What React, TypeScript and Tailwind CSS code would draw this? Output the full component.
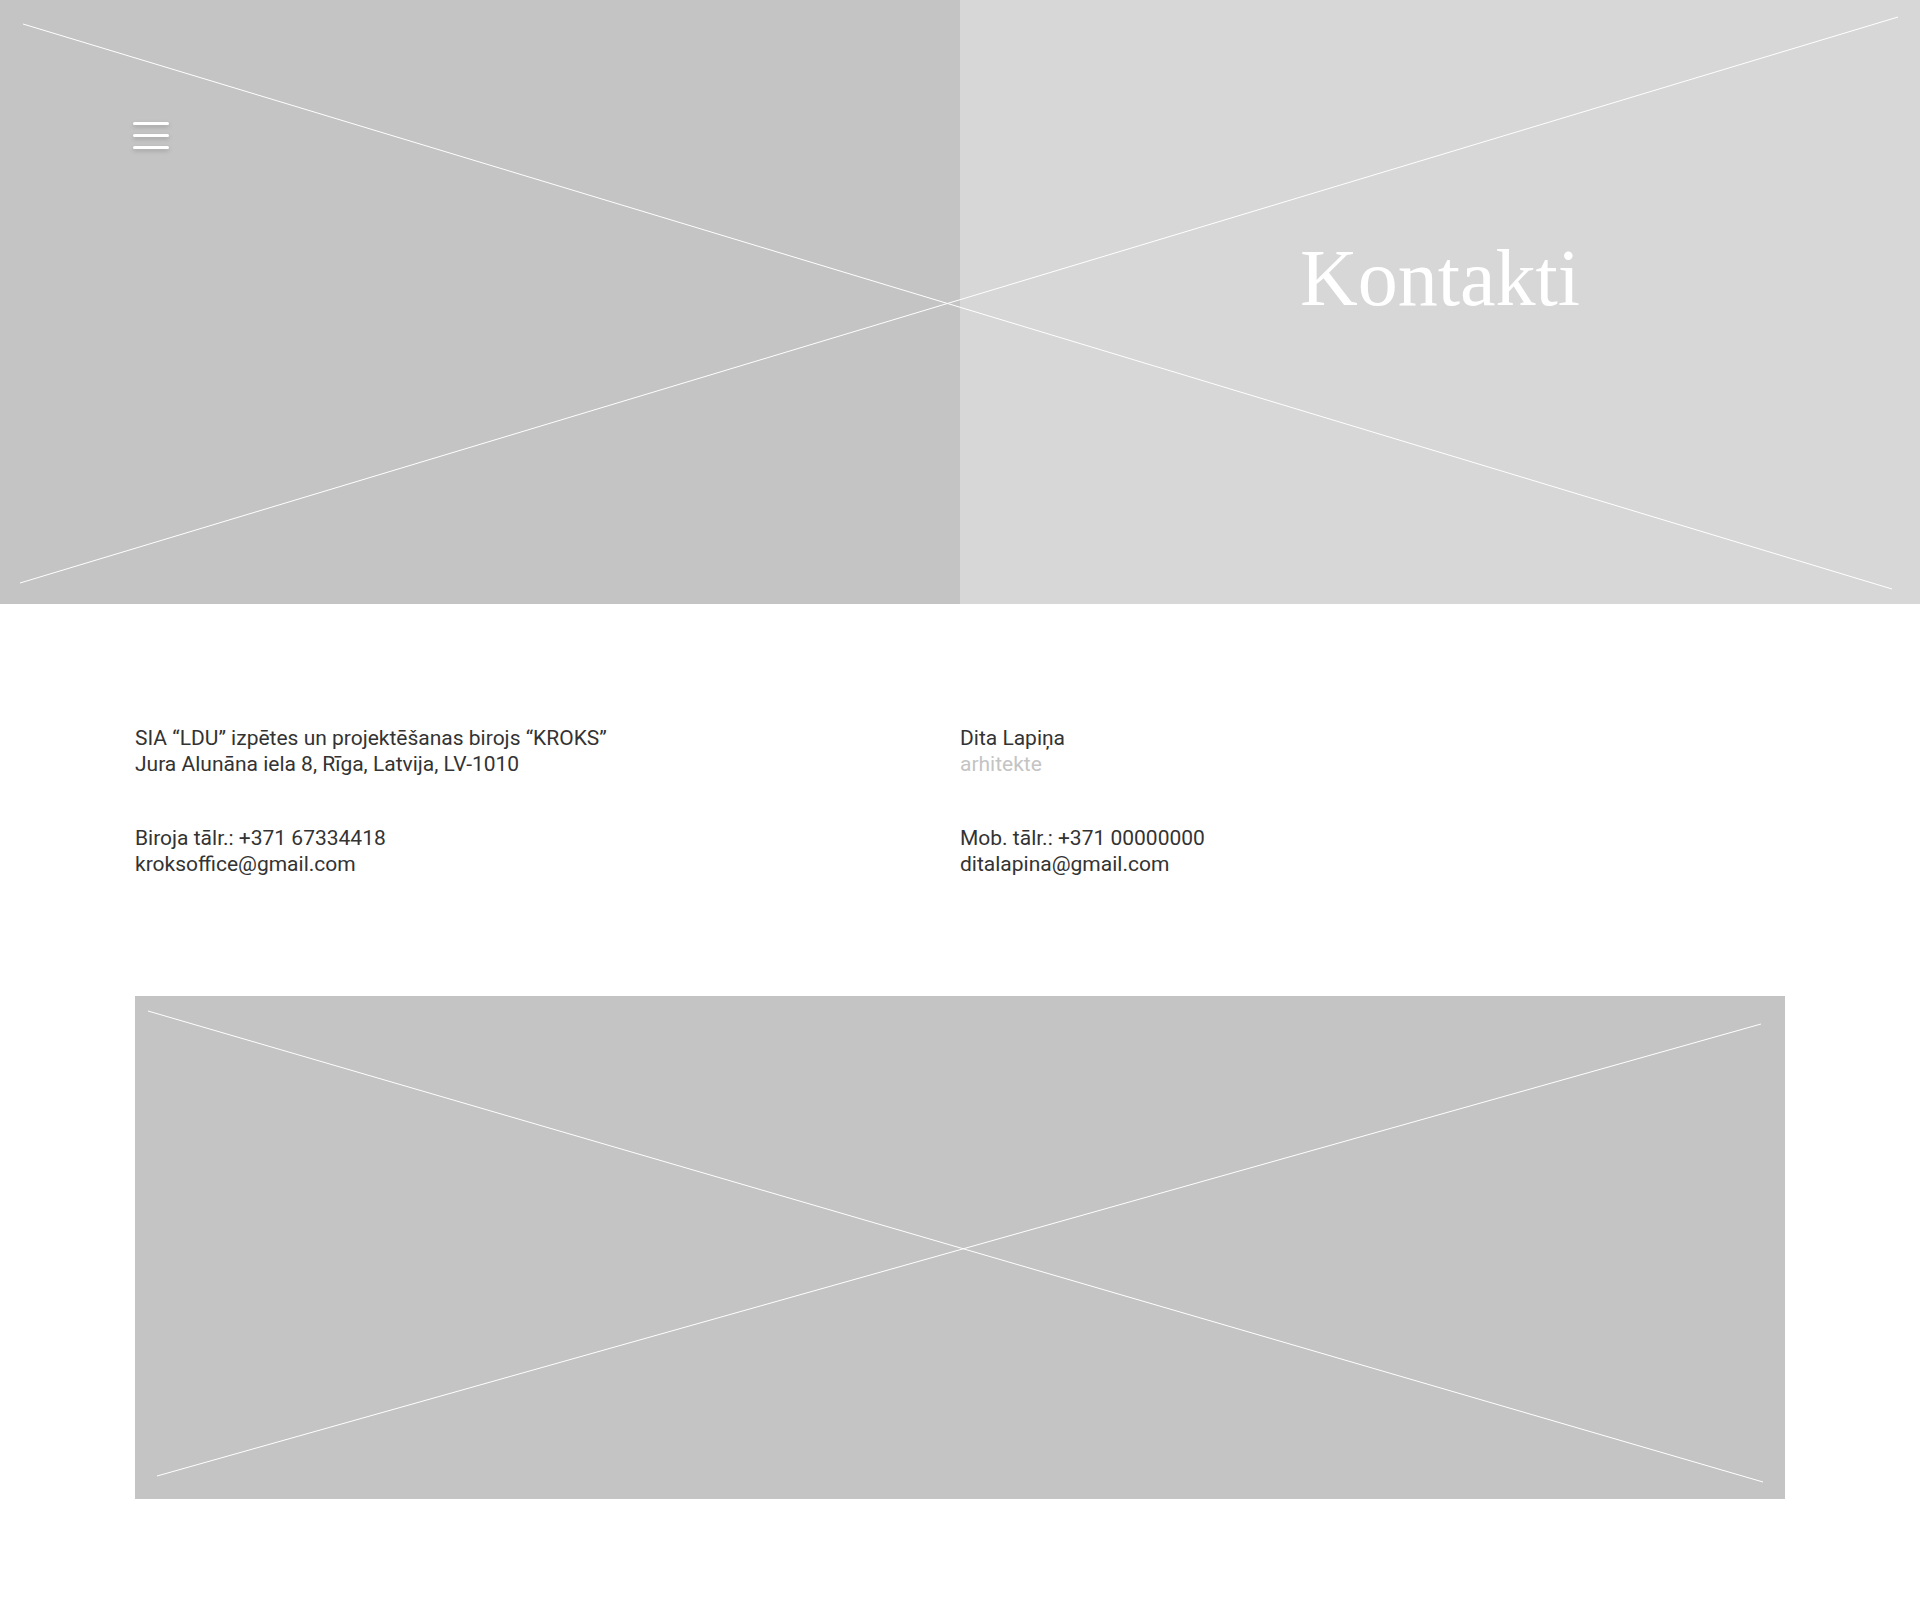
import React from 'react';

function Cross({ w, h, a, b }: { w: number; h: number; a: number[]; b: number[] }) {
  return (
    <svg className="absolute inset-0 h-full w-full pointer-events-none" viewBox={`0 0 ${w} ${h}`} preserveAspectRatio="none">
      <line x1={a[0]} y1={a[1]} x2={a[2]} y2={a[3]} stroke="#ffffff" strokeWidth="1" />
      <line x1={b[0]} y1={b[1]} x2={b[2]} y2={b[3]} stroke="#ffffff" strokeWidth="1" />
    </svg>
  );
}

function Burger() {
  return (
    <button className="flex w-9 flex-col gap-[9px] drop-shadow-[0_2px_2px_rgba(0,0,0,0.18)]" aria-label="menu">
      <span className="block h-[3px] w-9 rounded-sm bg-white" />
      <span className="block h-[3px] w-9 rounded-sm bg-white" />
      <span className="block h-[3px] w-9 rounded-sm bg-white" />
    </button>
  );
}

export default function App() {
  return (
    <div className="min-h-[1620px] bg-white font-['Roboto',sans-serif] text-[21px] leading-[26px] text-[#333333]">
      {/* Hero */}
      <header className="relative grid h-[604px] grid-cols-2">
        <div className="bg-[#c4c4c4] pl-[133px] pt-[122px]">
          <Burger />
        </div>
        <div className="flex justify-center bg-[#d7d7d7] pt-[230px]">
          <h1 className="font-['Liberation_Serif',serif] text-[80px] leading-[96px] text-white">Kontakti</h1>
        </div>
        <Cross w={1920} h={604} a={[23, 24, 1892, 589]} b={[20, 583, 1898, 17]} />
      </header>

      {/* Contacts */}
      <section className="grid grid-cols-2 pt-[121px]">
        <div className="flex flex-col gap-[48px] pl-[135px]">
          <div>
            <p>SIA “LDU” izpētes un projektēšanas birojs “KROKS”</p>
            <p>Jura Alunāna iela 8, Rīga, Latvija, LV-1010</p>
          </div>
          <div>
            <p>Biroja tālr.: +371 67334418</p>
            <p>kroksoffice@gmail.com</p>
          </div>
        </div>
        <div className="flex flex-col gap-[48px]">
          <div>
            <p>Dita Lapiņa</p>
            <p className="text-[#c4c4c4]">arhitekte</p>
          </div>
          <div>
            <p>Mob. tālr.: +371 00000000</p>
            <p>ditalapina@gmail.com</p>
          </div>
        </div>
      </section>

      {/* Map placeholder */}
      <section className="px-[135px] pb-[120px] pt-[119px]">
        <div className="relative h-[503px] bg-[#c4c4c4]">
          <Cross w={1650} h={503} a={[13, 15, 1628, 486]} b={[22, 480, 1626, 28]} />
        </div>
      </section>
    </div>
  );
}
